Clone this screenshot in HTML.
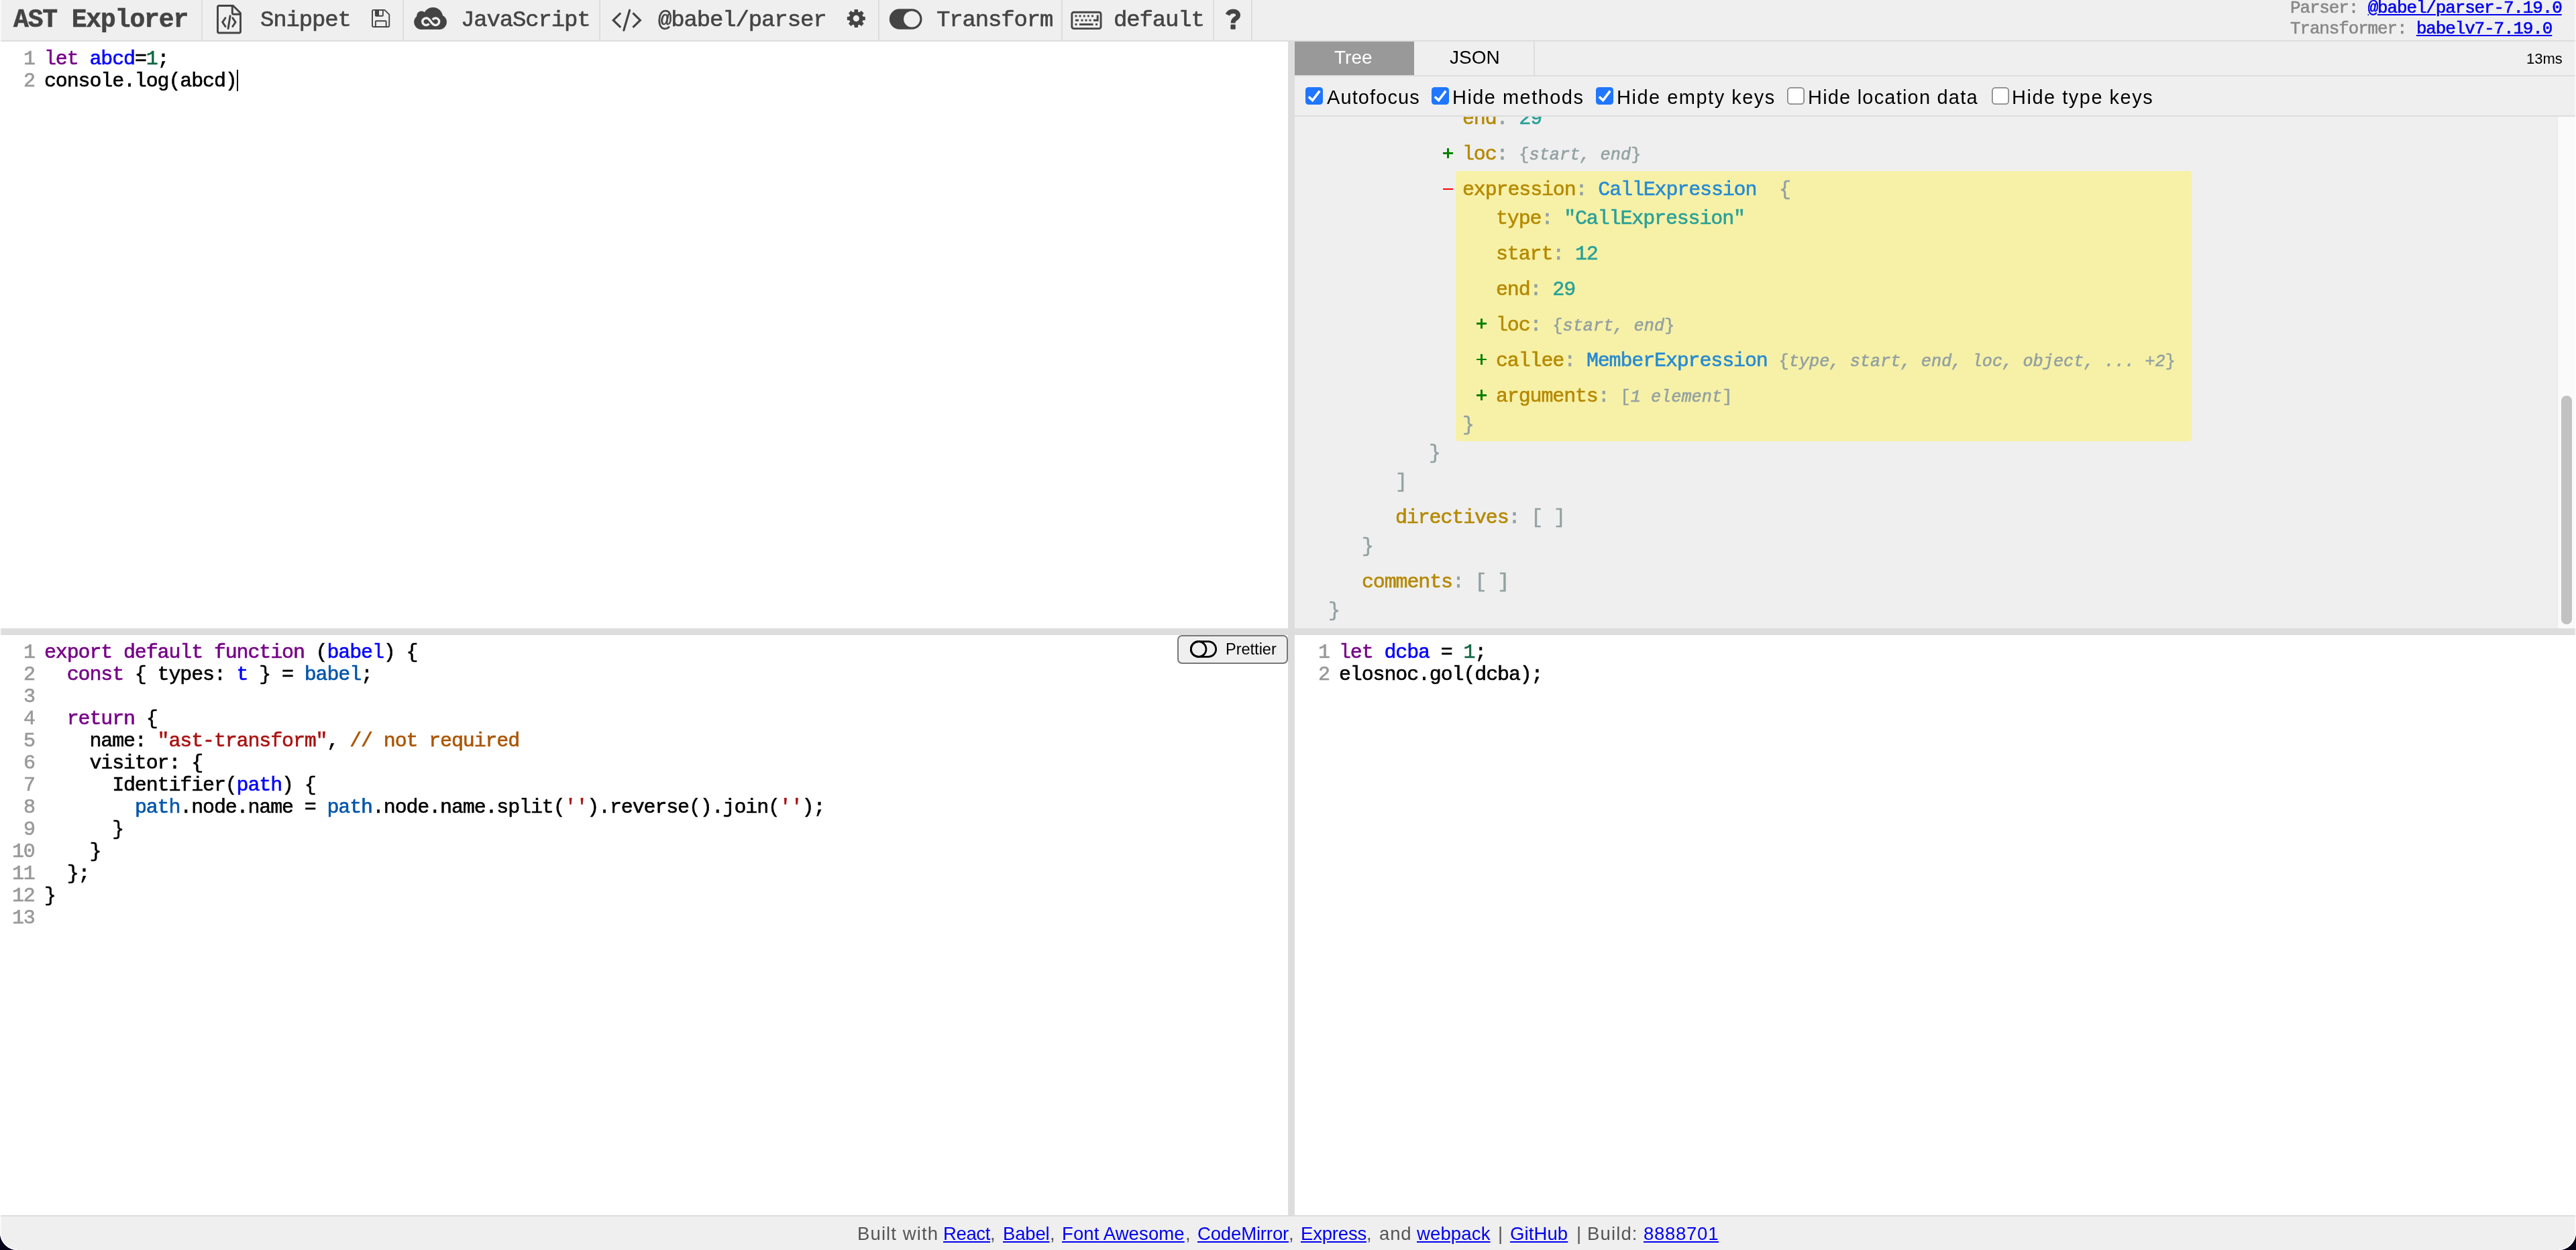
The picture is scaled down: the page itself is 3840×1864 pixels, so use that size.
<!DOCTYPE html>
<html><head><meta charset="utf-8"><title>AST Explorer</title>
<style>
html,body{margin:0;padding:0;width:3840px;height:1864px;overflow:hidden;background:#fff;}
body{position:relative;font-family:"Liberation Sans",sans-serif;}
.t{position:absolute;white-space:pre;will-change:transform;}
.m{-webkit-text-stroke:0.6px currentColor;}
.r{position:absolute;box-sizing:border-box;}
svg{position:absolute;overflow:visible;}
a{color:#0000ee;text-decoration:underline;}
.kw{color:#770088}.df{color:#0000ff}.v2{color:#0055aa}.nm{color:#116644}.st{color:#aa1111}.cm{color:#aa5500}
.k{color:#b58900}.c{color:#93a1a1}.s{color:#2aa198}.ty{color:#268bd2}.p{color:#93a1a1;font-size:25.2px;letter-spacing:0.05px}.i{font-style:italic}
</style></head><body>

<div class="r" style="left:0px;top:0px;width:3840px;height:62px;background:#efefef;border-bottom:2px solid #dddddd;"></div>
<div class="r" style="left:1930px;top:62px;width:1910px;height:875px;background:#efefef;"></div>
<div class="r" style="left:1920px;top:62px;width:10px;height:1750px;background:#dddddd;"></div>
<div class="r" style="left:0px;top:937px;width:3840px;height:10px;background:#dddddd;"></div>
<div class="r" style="left:0px;top:1812px;width:3840px;height:52px;background:#efefef;border-top:2px solid #dddddd;"></div>
<div class="r" style="left:300px;top:0px;width:2px;height:60px;background:#dddddd;"></div>
<div class="r" style="left:600px;top:0px;width:2px;height:60px;background:#dddddd;"></div>
<div class="r" style="left:893px;top:0px;width:2px;height:60px;background:#dddddd;"></div>
<div class="r" style="left:1309px;top:0px;width:2px;height:60px;background:#dddddd;"></div>
<div class="r" style="left:1582px;top:0px;width:2px;height:60px;background:#dddddd;"></div>
<div class="r" style="left:1808px;top:0px;width:2px;height:60px;background:#dddddd;"></div>
<div class="r" style="left:1865px;top:0px;width:2px;height:60px;background:#dddddd;"></div>
<div class="t m" style="left:20.00px;top:10.93px;font-family:'Liberation Mono', monospace;font-size:38px;line-height:38px;letter-spacing:-1.130px;color:#444444;font-weight:bold;">AST Explorer</div>
<div class="t m" style="left:388.00px;top:13.49px;font-family:'Liberation Mono', monospace;font-size:34px;line-height:34px;letter-spacing:-1.140px;color:#444444;font-weight:normal;">Snippet</div>
<div class="t m" style="left:687.00px;top:13.49px;font-family:'Liberation Mono', monospace;font-size:34px;line-height:34px;letter-spacing:-1.140px;color:#444444;font-weight:normal;">JavaScript</div>
<div class="t m" style="left:981.00px;top:13.49px;font-family:'Liberation Mono', monospace;font-size:34px;line-height:34px;letter-spacing:-1.140px;color:#444444;font-weight:normal;">@babel/parser</div>
<div class="t m" style="left:1396.00px;top:13.49px;font-family:'Liberation Mono', monospace;font-size:34px;line-height:34px;letter-spacing:-1.140px;color:#444444;font-weight:normal;">Transform</div>
<div class="t m" style="left:1660.00px;top:13.49px;font-family:'Liberation Mono', monospace;font-size:34px;line-height:34px;letter-spacing:-1.140px;color:#444444;font-weight:normal;">default</div>
<svg style="left:323px;top:7px" width="38" height="44" viewBox="0 0 38 44">
<path d="M3.5 1.5 H24.5 L35.5 12.5 V40 a2 2 0 0 1 -2 2 H3.5 a2 2 0 0 1 -2 -2 V3.5 a2 2 0 0 1 2 -2 Z" fill="none" stroke="#444444" stroke-width="2.9" stroke-linejoin="round"/>
<path d="M23.3 1.5 V12.3 a2 2 0 0 0 2 2 H35.5" fill="none" stroke="#444444" stroke-width="2.9"/>
<path d="M13.0 19.7 L8.7 26.1 L13.0 32.5 M23.8 19.7 L28.1 26.1 L23.8 32.5 M20.1 16.8 L17.1 35.6" fill="none" stroke="#444444" stroke-width="2.9" stroke-linecap="round" stroke-linejoin="miter"/>
</svg>
<svg style="left:554px;top:13px" width="30" height="30" viewBox="0 0 30 30">
<path d="M2.5 1.85 H19.3 L26.25 8.6 V25.45 a1.5 1.5 0 0 1 -1.5 1.5 H2.5 a1.5 1.5 0 0 1 -1.5 -1.5 V3.35 a1.5 1.5 0 0 1 1.5 -1.5Z" fill="none" stroke="#444444" stroke-width="1.9" stroke-linejoin="round"/>
<rect x="5.85" y="1.85" width="11" height="8.9" rx="1" fill="none" stroke="#444444" stroke-width="1.9"/>
<rect x="5.85" y="1.85" width="5.15" height="8.9" fill="#444444"/>
<path d="M5.85 26.95 V19.25 a1 1 0 0 1 1 -1 H20.65 a1 1 0 0 1 1 1 V26.95" fill="none" stroke="#444444" stroke-width="1.9"/>
</svg>
<svg style="left:617px;top:10px" width="50" height="35" viewBox="0 0 50 35">
<circle cx="28.5" cy="15.5" r="14.6" fill="#444444"/>
<circle cx="11.3" cy="13.5" r="7" fill="#444444"/>
<circle cx="11.2" cy="22.9" r="11" fill="#444444"/>
<circle cx="37.9" cy="22.9" r="11" fill="#444444"/>
<rect x="11" y="14" width="27" height="19.9" fill="#444444"/>
<path d="M18.4 22.3 m-5.1 0 a5.1 4.6 0 1 0 10.2 0 a5.1 4.6 0 1 0 -10.2 0Z" fill="none" stroke="#efefef" stroke-width="0"/>
<path d="M25.2 22.3 C22.4 18.3 21.1 17.1 18.4 17.1 C15.3 17.1 12.8 19.4 12.8 22.3 C12.8 25.2 15.3 27.5 18.4 27.5 C20 27.5 21.3 26.8 22.6 25.4 M25.2 22.3 C28 26.3 29.3 27.5 32 27.5 C35.1 27.5 37.6 25.2 37.6 22.3 C37.6 19.4 35.1 17.1 32 17.1 C30.4 17.1 29.1 17.8 27.8 19.2" fill="none" stroke="#efefef" stroke-width="3.5"/>
</svg>
<svg style="left:910px;top:12px" width="50" height="38" viewBox="0 0 50 38">
<path d="M15.2 7.4 L4.2 18.2 L15.2 28.9 M33.4 7.4 L44.4 18.2 L33.4 28.9" fill="none" stroke="#444444" stroke-width="3.1" stroke-linecap="butt"/>
<path d="M28.6 3.2 L19.8 33.2" fill="none" stroke="#444444" stroke-width="3.1" stroke-linecap="round"/>
</svg>
<svg style="left:1262px;top:13px" width="29" height="29" viewBox="-14.2 -14.4 28.8 28.8">
<circle cx="0" cy="0" r="7.45" fill="none" stroke="#444444" stroke-width="5.7"/>
<path d="M-3.1 -8 L-2.6 -13.4 L2.6 -13.4 L3.1 -8 Z" transform="rotate(0)" fill="#444444"/><path d="M-3.1 -8 L-2.6 -13.4 L2.6 -13.4 L3.1 -8 Z" transform="rotate(45)" fill="#444444"/><path d="M-3.1 -8 L-2.6 -13.4 L2.6 -13.4 L3.1 -8 Z" transform="rotate(90)" fill="#444444"/><path d="M-3.1 -8 L-2.6 -13.4 L2.6 -13.4 L3.1 -8 Z" transform="rotate(135)" fill="#444444"/><path d="M-3.1 -8 L-2.6 -13.4 L2.6 -13.4 L3.1 -8 Z" transform="rotate(180)" fill="#444444"/><path d="M-3.1 -8 L-2.6 -13.4 L2.6 -13.4 L3.1 -8 Z" transform="rotate(225)" fill="#444444"/><path d="M-3.1 -8 L-2.6 -13.4 L2.6 -13.4 L3.1 -8 Z" transform="rotate(270)" fill="#444444"/><path d="M-3.1 -8 L-2.6 -13.4 L2.6 -13.4 L3.1 -8 Z" transform="rotate(315)" fill="#444444"/>
</svg>
<svg style="left:1325px;top:13px" width="51" height="32" viewBox="0 0 51 32">
<rect x="0.8" y="0.3" width="48.7" height="30.4" rx="15.2" fill="#444444"/>
<circle cx="34.2" cy="15.5" r="12.1" fill="#efefef"/>
</svg>
<svg style="left:1596px;top:16px" width="47" height="29" viewBox="0 0 47 29">
<rect x="1.85" y="2.25" width="43.2" height="24.4" rx="2.8" fill="none" stroke="#444444" stroke-width="2.9"/>
<rect x="6.55" y="6.45" width="2.9" height="2.9" fill="#444444"/><rect x="12.55" y="6.45" width="2.9" height="2.9" fill="#444444"/><rect x="18.85" y="6.45" width="2.9" height="2.9" fill="#444444"/><rect x="24.95" y="6.45" width="2.9" height="2.9" fill="#444444"/><rect x="31.05" y="6.45" width="2.9" height="2.9" fill="#444444"/><rect x="15.55" y="12.75" width="2.9" height="2.9" fill="#444444"/><rect x="21.55" y="12.75" width="2.9" height="2.9" fill="#444444"/><rect x="27.55" y="12.75" width="2.9" height="2.9" fill="#444444"/><rect x="7.00" y="12.75" width="5" height="2.9" fill="#444444"/><path d="M34 14.20 H40.200000000000045 V6.399999999999999" fill="none" stroke="#444444" stroke-width="2.9"/><rect x="6.55" y="18.95" width="2.9" height="2.9" fill="#444444"/><rect x="13.00" y="18.95" width="20.6" height="2.9" fill="#444444"/><rect x="37.05" y="18.95" width="2.9" height="2.9" fill="#444444"/>
</svg>
<svg style="left:1826px;top:12px" width="26" height="34" viewBox="0 0 26 34">
<path d="M4 10.1 C6 5.5 9 4.8 12.4 4.8 C16.5 4.8 19.6 7 19.6 10.5 C19.6 14.5 16 15.6 14.5 16.8 C12.8 18.1 12.1 19.5 12.1 22.5" fill="none" stroke="#444444" stroke-width="6.8" stroke-linecap="butt"/>
<rect x="8.4" y="24.5" width="7.4" height="7.2" rx="1.3" fill="#444444"/>
</svg>
<div class="t m" style="left:3414.00px;top:-0.89px;font-family:'Liberation Mono', monospace;font-size:26px;line-height:26px;letter-spacing:-1.150px;color:#888;font-weight:normal;"><span style="color:#888">Parser: </span><a>@babel/parser-7.19.0</a></div>
<div class="t m" style="left:3414.00px;top:30.11px;font-family:'Liberation Mono', monospace;font-size:26px;line-height:26px;letter-spacing:-1.150px;color:#888;font-weight:normal;"><span style="color:#888">Transformer: </span><a>babelv7-7.19.0</a></div>
<div class="r" style="left:1930px;top:62px;width:1910px;height:52px;background:#efefef;border-bottom:2px solid #dddddd;"></div>
<div class="r" style="left:1930px;top:62px;width:178px;height:50px;background:#999999;"></div>
<div class="t" style="left:1989.00px;top:72.20px;font-family:'Liberation Sans', sans-serif;font-size:28px;line-height:28px;letter-spacing:0px;color:#ffffff;">Tree</div>
<div class="r" style="left:2286px;top:62px;width:2px;height:50px;background:#dddddd;"></div>
<div class="t" style="left:2161.00px;top:72.20px;font-family:'Liberation Sans', sans-serif;font-size:28px;line-height:28px;letter-spacing:0px;color:#000000;">JSON</div>
<div class="t" style="right:20px;top:77.30px;font-family:'Liberation Sans', sans-serif;font-size:22px;line-height:22px;color:#000">13ms</div>
<div class="r" style="left:1930px;top:114px;width:1910px;height:60px;background:#efefef;border-bottom:2px solid #dddddd;"></div>
<svg style="left:1946px;top:130px" width="26" height="26" viewBox="0 0 26 26">
<rect x="0" y="0" width="26" height="26" rx="4.6" fill="#1f76ff"/>
<path d="M4.8 14.2 L10.6 19.6 L21.2 5.6" fill="none" stroke="#fff" stroke-width="3.6" stroke-linejoin="miter"/>
</svg>
<div class="t" style="left:1978.00px;top:131.35px;font-family:'Liberation Sans', sans-serif;font-size:29px;line-height:29px;letter-spacing:1.1px;color:#000;">Autofocus</div>
<svg style="left:2134px;top:130px" width="26" height="26" viewBox="0 0 26 26">
<rect x="0" y="0" width="26" height="26" rx="4.6" fill="#1f76ff"/>
<path d="M4.8 14.2 L10.6 19.6 L21.2 5.6" fill="none" stroke="#fff" stroke-width="3.6" stroke-linejoin="miter"/>
</svg>
<div class="t" style="left:2165.00px;top:131.35px;font-family:'Liberation Sans', sans-serif;font-size:29px;line-height:29px;letter-spacing:1.45px;color:#000;">Hide methods</div>
<svg style="left:2379px;top:130px" width="26" height="26" viewBox="0 0 26 26">
<rect x="0" y="0" width="26" height="26" rx="4.6" fill="#1f76ff"/>
<path d="M4.8 14.2 L10.6 19.6 L21.2 5.6" fill="none" stroke="#fff" stroke-width="3.6" stroke-linejoin="miter"/>
</svg>
<div class="t" style="left:2410.00px;top:131.35px;font-family:'Liberation Sans', sans-serif;font-size:29px;line-height:29px;letter-spacing:1.5px;color:#000;">Hide empty keys</div>
<svg style="left:2664px;top:130px" width="26" height="26" viewBox="0 0 26 26">
<rect x="0.9" y="0.9" width="24.2" height="24.2" rx="4.4" fill="#ffffff" stroke="#8a8a8a" stroke-width="1.8"/>
</svg>
<div class="t" style="left:2695.00px;top:131.35px;font-family:'Liberation Sans', sans-serif;font-size:29px;line-height:29px;letter-spacing:1.2px;color:#000;">Hide location data</div>
<svg style="left:2969px;top:130px" width="26" height="26" viewBox="0 0 26 26">
<rect x="0.9" y="0.9" width="24.2" height="24.2" rx="4.4" fill="#ffffff" stroke="#8a8a8a" stroke-width="1.8"/>
</svg>
<div class="t" style="left:2999.00px;top:131.35px;font-family:'Liberation Sans', sans-serif;font-size:29px;line-height:29px;letter-spacing:1.5px;color:#000;">Hide type keys</div>
<div class="r" style="left:1930px;top:174px;width:1882px;height:763px;overflow:hidden;background:#efefef;">
<div class="r" style="left:240px;top:81px;width:1097px;height:403px;background:#f7f1a7;border-radius:4px;"></div>
<div class="t m" style="left:250.00px;top:-11.95px;font-family:'Liberation Mono', monospace;font-size:30px;line-height:30px;letter-spacing:-1.144px;color:#000;font-weight:normal;"><span class="k">end</span><span class="c">: </span><span class="s">29</span></div>
<div class="r" style="left:220.7px;top:52.8px;width:15.4px;height:2.9px;background:#008000"></div>
<div class="r" style="left:226.9px;top:46.5px;width:2.9px;height:15.4px;background:#008000"></div>
<div class="t m" style="left:250.00px;top:41.05px;font-family:'Liberation Mono', monospace;font-size:30px;line-height:30px;letter-spacing:-1.144px;color:#000;font-weight:normal;"><span class="k">loc</span><span class="c">: </span><span class="p">{<i>start, end</i>}</span></div>
<div class="r" style="left:220.7px;top:106.5px;width:15.4px;height:2.9px;background:#ff0000"></div>
<div class="t m" style="left:250.00px;top:94.05px;font-family:'Liberation Mono', monospace;font-size:30px;line-height:30px;letter-spacing:-1.144px;color:#000;font-weight:normal;"><span class="k">expression</span><span class="c">: </span><span class="ty">CallExpression</span>  <span class="c">{</span></div>
<div class="t m" style="left:300.00px;top:137.05px;font-family:'Liberation Mono', monospace;font-size:30px;line-height:30px;letter-spacing:-1.144px;color:#000;font-weight:normal;"><span class="k">type</span><span class="c">: </span><span class="s">"CallExpression"</span></div>
<div class="t m" style="left:300.00px;top:190.05px;font-family:'Liberation Mono', monospace;font-size:30px;line-height:30px;letter-spacing:-1.144px;color:#000;font-weight:normal;"><span class="k">start</span><span class="c">: </span><span class="s">12</span></div>
<div class="t m" style="left:300.00px;top:243.05px;font-family:'Liberation Mono', monospace;font-size:30px;line-height:30px;letter-spacing:-1.144px;color:#000;font-weight:normal;"><span class="k">end</span><span class="c">: </span><span class="s">29</span></div>
<div class="r" style="left:270.7px;top:307.4px;width:15.4px;height:2.9px;background:#008000"></div>
<div class="r" style="left:276.9px;top:301.1px;width:2.9px;height:15.4px;background:#008000"></div>
<div class="t m" style="left:300.00px;top:295.65px;font-family:'Liberation Mono', monospace;font-size:30px;line-height:30px;letter-spacing:-1.144px;color:#000;font-weight:normal;"><span class="k">loc</span><span class="c">: </span><span class="p">{<i>start, end</i>}</span></div>
<div class="r" style="left:270.7px;top:360.6px;width:15.4px;height:2.9px;background:#008000"></div>
<div class="r" style="left:276.9px;top:354.3px;width:2.9px;height:15.4px;background:#008000"></div>
<div class="t m" style="left:300.00px;top:348.85px;font-family:'Liberation Mono', monospace;font-size:30px;line-height:30px;letter-spacing:-1.144px;color:#000;font-weight:normal;"><span class="k">callee</span><span class="c">: </span><span class="ty">MemberExpression</span> <span class="p">{<i>type, start, end, loc, object, ... +2</i>}</span></div>
<div class="r" style="left:270.7px;top:413.7px;width:15.4px;height:2.9px;background:#008000"></div>
<div class="r" style="left:276.9px;top:407.4px;width:2.9px;height:15.4px;background:#008000"></div>
<div class="t m" style="left:300.00px;top:401.95px;font-family:'Liberation Mono', monospace;font-size:30px;line-height:30px;letter-spacing:-1.144px;color:#000;font-weight:normal;"><span class="k">arguments</span><span class="c">: </span><span class="p">[<i>1 element</i>]</span></div>
<div class="t m" style="left:250.00px;top:444.55px;font-family:'Liberation Mono', monospace;font-size:30px;line-height:30px;letter-spacing:-1.144px;color:#000;font-weight:normal;"><span class="c">}</span></div>
<div class="t m" style="left:200.00px;top:487.05px;font-family:'Liberation Mono', monospace;font-size:30px;line-height:30px;letter-spacing:-1.144px;color:#000;font-weight:normal;"><span class="c">}</span></div>
<div class="t m" style="left:150.00px;top:530.05px;font-family:'Liberation Mono', monospace;font-size:30px;line-height:30px;letter-spacing:-1.144px;color:#000;font-weight:normal;"><span class="c">]</span></div>
<div class="t m" style="left:150.00px;top:583.25px;font-family:'Liberation Mono', monospace;font-size:30px;line-height:30px;letter-spacing:-1.144px;color:#000;font-weight:normal;"><span class="k">directives</span><span class="c">: [ ]</span></div>
<div class="t m" style="left:100.00px;top:626.05px;font-family:'Liberation Mono', monospace;font-size:30px;line-height:30px;letter-spacing:-1.144px;color:#000;font-weight:normal;"><span class="c">}</span></div>
<div class="t m" style="left:100.00px;top:679.15px;font-family:'Liberation Mono', monospace;font-size:30px;line-height:30px;letter-spacing:-1.144px;color:#000;font-weight:normal;"><span class="k">comments</span><span class="c">: [ ]</span></div>
<div class="t m" style="left:50.00px;top:722.05px;font-family:'Liberation Mono', monospace;font-size:30px;line-height:30px;letter-spacing:-1.144px;color:#000;font-weight:normal;"><span class="c">}</span></div>
</div>
<div class="r" style="left:3812px;top:174px;width:28px;height:763px;background:#fafafa;border-left:1px solid #e8e8e8;"></div>
<div class="r" style="left:3818px;top:590px;width:16px;height:341px;background:#c2c2c2;border-radius:8px;"></div>
<div class="t m" style="left:35.14px;top:73.05px;font-family:'Liberation Mono', monospace;font-size:30px;line-height:30px;letter-spacing:-1.144px;color:#999999;font-weight:normal;">1</div>
<div class="t m" style="left:66.00px;top:73.05px;font-family:'Liberation Mono', monospace;font-size:30px;line-height:30px;letter-spacing:-1.144px;color:#000;font-weight:normal;"><span class="kw">let</span> <span class="df">abcd</span>=<span class="nm">1</span>;</div>
<div class="t m" style="left:35.14px;top:106.05px;font-family:'Liberation Mono', monospace;font-size:30px;line-height:30px;letter-spacing:-1.144px;color:#999999;font-weight:normal;">2</div>
<div class="t m" style="left:66.00px;top:106.05px;font-family:'Liberation Mono', monospace;font-size:30px;line-height:30px;letter-spacing:-1.144px;color:#000;font-weight:normal;">console.log(abcd)</div>
<div class="r" style="left:353px;top:104px;width:2px;height:32px;background:#000;"></div>
<div class="t m" style="left:35.14px;top:958.05px;font-family:'Liberation Mono', monospace;font-size:30px;line-height:30px;letter-spacing:-1.144px;color:#999999;font-weight:normal;">1</div>
<div class="t m" style="left:66.00px;top:958.05px;font-family:'Liberation Mono', monospace;font-size:30px;line-height:30px;letter-spacing:-1.144px;color:#000;font-weight:normal;"><span class="kw">export</span> <span class="kw">default</span> <span class="kw">function</span> (<span class="df">babel</span>) {</div>
<div class="t m" style="left:35.14px;top:991.05px;font-family:'Liberation Mono', monospace;font-size:30px;line-height:30px;letter-spacing:-1.144px;color:#999999;font-weight:normal;">2</div>
<div class="t m" style="left:66.00px;top:991.05px;font-family:'Liberation Mono', monospace;font-size:30px;line-height:30px;letter-spacing:-1.144px;color:#000;font-weight:normal;">  <span class="kw">const</span> { types: <span class="df">t</span> } = <span class="v2">babel</span>;</div>
<div class="t m" style="left:35.14px;top:1024.05px;font-family:'Liberation Mono', monospace;font-size:30px;line-height:30px;letter-spacing:-1.144px;color:#999999;font-weight:normal;">3</div>
<div class="t m" style="left:35.14px;top:1057.05px;font-family:'Liberation Mono', monospace;font-size:30px;line-height:30px;letter-spacing:-1.144px;color:#999999;font-weight:normal;">4</div>
<div class="t m" style="left:66.00px;top:1057.05px;font-family:'Liberation Mono', monospace;font-size:30px;line-height:30px;letter-spacing:-1.144px;color:#000;font-weight:normal;">  <span class="kw">return</span> {</div>
<div class="t m" style="left:35.14px;top:1090.05px;font-family:'Liberation Mono', monospace;font-size:30px;line-height:30px;letter-spacing:-1.144px;color:#999999;font-weight:normal;">5</div>
<div class="t m" style="left:66.00px;top:1090.05px;font-family:'Liberation Mono', monospace;font-size:30px;line-height:30px;letter-spacing:-1.144px;color:#000;font-weight:normal;">    name: <span class="st">"ast-transform"</span>, <span class="cm">// not required</span></div>
<div class="t m" style="left:35.14px;top:1123.05px;font-family:'Liberation Mono', monospace;font-size:30px;line-height:30px;letter-spacing:-1.144px;color:#999999;font-weight:normal;">6</div>
<div class="t m" style="left:66.00px;top:1123.05px;font-family:'Liberation Mono', monospace;font-size:30px;line-height:30px;letter-spacing:-1.144px;color:#000;font-weight:normal;">    visitor: {</div>
<div class="t m" style="left:35.14px;top:1156.05px;font-family:'Liberation Mono', monospace;font-size:30px;line-height:30px;letter-spacing:-1.144px;color:#999999;font-weight:normal;">7</div>
<div class="t m" style="left:66.00px;top:1156.05px;font-family:'Liberation Mono', monospace;font-size:30px;line-height:30px;letter-spacing:-1.144px;color:#000;font-weight:normal;">      Identifier(<span class="df">path</span>) {</div>
<div class="t m" style="left:35.14px;top:1189.05px;font-family:'Liberation Mono', monospace;font-size:30px;line-height:30px;letter-spacing:-1.144px;color:#999999;font-weight:normal;">8</div>
<div class="t m" style="left:66.00px;top:1189.05px;font-family:'Liberation Mono', monospace;font-size:30px;line-height:30px;letter-spacing:-1.144px;color:#000;font-weight:normal;">        <span class="v2">path</span>.node.name = <span class="v2">path</span>.node.name.split(<span class="st">''</span>).reverse().join(<span class="st">''</span>);</div>
<div class="t m" style="left:35.14px;top:1222.05px;font-family:'Liberation Mono', monospace;font-size:30px;line-height:30px;letter-spacing:-1.144px;color:#999999;font-weight:normal;">9</div>
<div class="t m" style="left:66.00px;top:1222.05px;font-family:'Liberation Mono', monospace;font-size:30px;line-height:30px;letter-spacing:-1.144px;color:#000;font-weight:normal;">      }</div>
<div class="t m" style="left:18.29px;top:1255.05px;font-family:'Liberation Mono', monospace;font-size:30px;line-height:30px;letter-spacing:-1.144px;color:#999999;font-weight:normal;">10</div>
<div class="t m" style="left:66.00px;top:1255.05px;font-family:'Liberation Mono', monospace;font-size:30px;line-height:30px;letter-spacing:-1.144px;color:#000;font-weight:normal;">    }</div>
<div class="t m" style="left:18.29px;top:1288.05px;font-family:'Liberation Mono', monospace;font-size:30px;line-height:30px;letter-spacing:-1.144px;color:#999999;font-weight:normal;">11</div>
<div class="t m" style="left:66.00px;top:1288.05px;font-family:'Liberation Mono', monospace;font-size:30px;line-height:30px;letter-spacing:-1.144px;color:#000;font-weight:normal;">  };</div>
<div class="t m" style="left:18.29px;top:1321.05px;font-family:'Liberation Mono', monospace;font-size:30px;line-height:30px;letter-spacing:-1.144px;color:#999999;font-weight:normal;">12</div>
<div class="t m" style="left:66.00px;top:1321.05px;font-family:'Liberation Mono', monospace;font-size:30px;line-height:30px;letter-spacing:-1.144px;color:#000;font-weight:normal;">}</div>
<div class="t m" style="left:18.29px;top:1354.05px;font-family:'Liberation Mono', monospace;font-size:30px;line-height:30px;letter-spacing:-1.144px;color:#999999;font-weight:normal;">13</div>
<div class="t m" style="left:1965.14px;top:958.05px;font-family:'Liberation Mono', monospace;font-size:30px;line-height:30px;letter-spacing:-1.144px;color:#999999;font-weight:normal;">1</div>
<div class="t m" style="left:1996.00px;top:958.05px;font-family:'Liberation Mono', monospace;font-size:30px;line-height:30px;letter-spacing:-1.144px;color:#000;font-weight:normal;"><span class="kw">let</span> <span class="df">dcba</span> = <span class="nm">1</span>;</div>
<div class="t m" style="left:1965.14px;top:991.05px;font-family:'Liberation Mono', monospace;font-size:30px;line-height:30px;letter-spacing:-1.144px;color:#999999;font-weight:normal;">2</div>
<div class="t m" style="left:1996.00px;top:991.05px;font-family:'Liberation Mono', monospace;font-size:30px;line-height:30px;letter-spacing:-1.144px;color:#000;font-weight:normal;">elosnoc.gol(dcba);</div>
<div class="r" style="left:1755px;top:947px;width:165px;height:43px;background:#efefef;border:2px solid #777777;border-radius:7px;"></div>
<svg style="left:1773px;top:954px" width="44" height="28" viewBox="0 0 44 28">
<rect x="2.3" y="2.7" width="37.4" height="22.7" rx="11.35" fill="none" stroke="#000" stroke-width="2.7"/>
<circle cx="13.65" cy="14.05" r="11.35" fill="none" stroke="#000" stroke-width="2.7"/>
</svg>
<div class="t" style="left:1827.00px;top:957.02px;font-family:'Liberation Sans', sans-serif;font-size:23.5px;line-height:23.5px;letter-spacing:0px;color:#000;">Prettier</div>
<div class="t" style="left:1277.50px;top:1825.62px;font-family:'Liberation Sans', sans-serif;font-size:27.5px;line-height:27.5px;letter-spacing:1.12px;color:#555555;">Built with</div>
<div class="t" style="left:1406.25px;top:1825.62px;font-family:'Liberation Sans', sans-serif;font-size:27.5px;line-height:27.5px;letter-spacing:-0.36px;color:#0000ee;"><a>React</a></div>
<div class="t" style="left:1476.25px;top:1825.62px;font-family:'Liberation Sans', sans-serif;font-size:27.5px;line-height:27.5px;letter-spacing:0px;color:#555555;">,</div>
<div class="t" style="left:1495.00px;top:1825.62px;font-family:'Liberation Sans', sans-serif;font-size:27.5px;line-height:27.5px;letter-spacing:-0.16px;color:#0000ee;"><a>Babel</a></div>
<div class="t" style="left:1564.50px;top:1825.62px;font-family:'Liberation Sans', sans-serif;font-size:27.5px;line-height:27.5px;letter-spacing:0px;color:#555555;">,</div>
<div class="t" style="left:1582.50px;top:1825.62px;font-family:'Liberation Sans', sans-serif;font-size:27.5px;line-height:27.5px;letter-spacing:0.11px;color:#0000ee;"><a>Font Awesome</a></div>
<div class="t" style="left:1766.75px;top:1825.62px;font-family:'Liberation Sans', sans-serif;font-size:27.5px;line-height:27.5px;letter-spacing:0px;color:#555555;">,</div>
<div class="t" style="left:1785.00px;top:1825.62px;font-family:'Liberation Sans', sans-serif;font-size:27.5px;line-height:27.5px;letter-spacing:-0.15px;color:#0000ee;"><a>CodeMirror</a></div>
<div class="t" style="left:1921.00px;top:1825.62px;font-family:'Liberation Sans', sans-serif;font-size:27.5px;line-height:27.5px;letter-spacing:0px;color:#555555;">,</div>
<div class="t" style="left:1939.00px;top:1825.62px;font-family:'Liberation Sans', sans-serif;font-size:27.5px;line-height:27.5px;letter-spacing:-0.19px;color:#0000ee;"><a>Express</a></div>
<div class="t" style="left:2037.00px;top:1825.62px;font-family:'Liberation Sans', sans-serif;font-size:27.5px;line-height:27.5px;letter-spacing:0px;color:#555555;">,</div>
<div class="t" style="left:2055.50px;top:1825.62px;font-family:'Liberation Sans', sans-serif;font-size:27.5px;line-height:27.5px;letter-spacing:0.85px;color:#555555;">and</div>
<div class="t" style="left:2111.50px;top:1825.62px;font-family:'Liberation Sans', sans-serif;font-size:27.5px;line-height:27.5px;letter-spacing:0.14px;color:#0000ee;"><a>webpack</a></div>
<div class="t" style="left:2233.00px;top:1825.62px;font-family:'Liberation Sans', sans-serif;font-size:27.5px;line-height:27.5px;letter-spacing:0px;color:#555555;">|</div>
<div class="t" style="left:2250.75px;top:1825.62px;font-family:'Liberation Sans', sans-serif;font-size:27.5px;line-height:27.5px;letter-spacing:0.11px;color:#0000ee;"><a>GitHub</a></div>
<div class="t" style="left:2349.50px;top:1825.62px;font-family:'Liberation Sans', sans-serif;font-size:27.5px;line-height:27.5px;letter-spacing:0px;color:#555555;">|</div>
<div class="t" style="left:2365.75px;top:1825.62px;font-family:'Liberation Sans', sans-serif;font-size:27.5px;line-height:27.5px;letter-spacing:1.14px;color:#555555;">Build:</div>
<div class="t" style="left:2449.60px;top:1825.62px;font-family:'Liberation Sans', sans-serif;font-size:27.5px;line-height:27.5px;letter-spacing:0.73px;color:#0000ee;"><a>8888701</a></div>
<div class="r" style="left:0px;top:0px;width:2px;height:1864px;background:rgba(255,255,255,0.55);"></div>
<div class="r" style="left:3838px;top:0px;width:2px;height:1864px;background:rgba(255,255,255,0.55);"></div>
<svg style="left:0px;top:1838px" width="26" height="26" viewBox="0 0 26 26">
<path d="M0 0 A26 26 0 0 0 26 26 L0 26 Z" fill="#07041a"/>
<path d="M0.6 0 A25.4 25.4 0 0 0 26 25.4" fill="none" stroke="#ffffff" stroke-width="1.3"/>
</svg>
<svg style="left:3814px;top:1838px" width="26" height="26" viewBox="0 0 26 26">
<path d="M26 0 A26 26 0 0 1 0 26 L26 26 Z" fill="#07041a"/>
<path d="M25.4 0 A25.4 25.4 0 0 1 0 25.4" fill="none" stroke="#ffffff" stroke-width="1.3"/>
</svg>
</body></html>
